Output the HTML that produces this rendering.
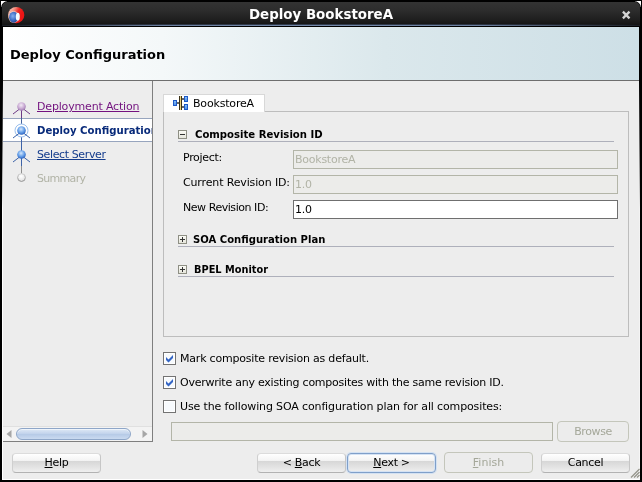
<!DOCTYPE html>
<html>
<head>
<meta charset="utf-8">
<title>Deploy BookstoreA</title>
<style>
html,body{margin:0;padding:0;}
body{width:642px;height:482px;overflow:hidden;background:#000;font-family:"DejaVu Sans","Liberation Sans",sans-serif;font-size:11px;color:#000;}
#win{will-change:transform;position:absolute;left:0;top:0;width:642px;height:482px;background:#000;overflow:hidden;}
.abs{position:absolute;}
#titlebar{left:2px;top:2px;width:638px;height:22px;background:linear-gradient(#333333,#2c2c2c 40%,#1f1f1f 80%,#161616);border-radius:5px 5px 0 0;}
#frameblk{left:1px;top:1px;width:640px;height:20px;background:#000;border-radius:7px 7px 0 0;}
#tl1{left:2px;top:24px;width:638px;height:1px;background:linear-gradient(90deg,#141414,#2c3443 25%,#323c4e 50%,#2c3443 75%,#141414);}
#tl2{left:2px;top:25px;width:638px;height:1px;background:linear-gradient(90deg,#1a1d24,#6b7f9f 25%,#7489a9 50%,#6b7f9f 75%,#1a1d24);}
#cornerL{left:1px;top:1px;width:6px;height:6px;background:#fff;}
#cornerR{left:635px;top:1px;width:6px;height:6px;background:#fff;}
#title{left:0;top:7px;width:642px;text-align:center;color:#fff;font-weight:bold;font-size:13.4px;line-height:16px;white-space:nowrap;}
#content{left:3px;top:27px;width:636px;height:452px;background:#ededed;border-bottom:1px solid #fff;}
#rcol{left:639px;top:27px;width:1px;height:453px;background:linear-gradient(#000,#000 12%,#666 25%,#f2f2f2 40%,#f6f6f6);}
#lcol{left:2px;top:27px;width:1px;height:453px;background:linear-gradient(#000,#000 12%,#666 25%,#fff 40%,#fff);}
#header{left:3px;top:27px;width:636px;height:53px;background:linear-gradient(90deg,#ffffff 0%,#f4f8f9 25%,#dbe8ec 60%,#cddfe6 100%);}
#hline{left:3px;top:80px;width:636px;height:1px;background:#6e6e6e;}
#htitle{left:10px;top:47px;font-weight:bold;font-size:13px;line-height:16px;white-space:nowrap;}
#leftpanel{left:3px;top:81px;width:149px;height:360px;background:#ededed;border-right:1px solid #7f7f7f;border-bottom:1px solid #7f7f7f;}
.t{white-space:nowrap;line-height:13px;letter-spacing:-0.2px;}
.b{font-weight:bold;letter-spacing:0;display:inline-block;transform-origin:0 0;}
.btn{letter-spacing:-0.3px;height:18px;border:1px solid;border-color:#dcdcdc #c6c6c6 #b2b2b2 #cfcfcf;border-radius:4px;background:linear-gradient(#ffffff,#f4f4f4 36%,#d6d6d6 38%,#e2e2e2 70%,#efefef);text-align:center;line-height:18px;white-space:nowrap;}
.btn.dis{color:#a4a799;background:#ececec;border-color:#c4c6bb;}
.field{height:17px;border:1px solid #b3b5a8;background:#ececea;}
.cb{width:11px;height:11px;border:1px solid #737373;background:#f7fafd;box-shadow:inset 0 0 0 1px #fff;}
.sec{height:1px;background:#aeb0bb;}
.pm{width:7px;height:7px;border:1px solid #8e8f84;background:linear-gradient(#fafaf5,#e6e6dc);}
</style>
</head>
<body>
<div id="win">
  <div class="abs" id="cornerL"></div>
  <div class="abs" id="cornerR"></div>
  <div class="abs" id="frameblk"></div>
  <div class="abs" id="titlebar"></div>
  <div class="abs" id="tl1"></div><div class="abs" id="tl2"></div>
  <svg class="abs" style="left:8px;top:6px" width="18" height="19" viewBox="0 0 18 19">
    <defs>
      <radialGradient id="bl" cx="0.4" cy="0.4" r="0.65"><stop offset="0" stop-color="#86aeee"/><stop offset="0.6" stop-color="#3f6cc4"/><stop offset="1" stop-color="#203f8c"/></radialGradient>
      <linearGradient id="rd" x1="0" y1="0.15" x2="0.75" y2="0.55"><stop offset="0" stop-color="#f9cdbf"/><stop offset="0.35" stop-color="#f59c8c"/><stop offset="0.7" stop-color="#ee2a25"/><stop offset="1" stop-color="#ec1515"/></linearGradient>
    </defs>
    <circle cx="8.2" cy="9.1" r="8.1" fill="url(#rd)"/>
    <ellipse cx="5.7" cy="11" rx="5.3" ry="6" fill="#f7ddd6" opacity="0.75"/>
    <ellipse cx="5.7" cy="11.2" rx="4.6" ry="5.5" fill="url(#bl)"/>
    <ellipse cx="9.8" cy="10.7" rx="2" ry="3.9" fill="#f4fbff"/>
  </svg>
  <div class="abs" id="title">Deploy BookstoreA</div>
  <svg class="abs" style="left:621px;top:10px" width="11" height="11" viewBox="0 0 11 11"><path d="M1.9 1.6 L8.5 8.4 M8.5 1.6 L1.9 8.4" stroke="#d4d4d4" stroke-width="2.3" fill="none"/></svg>

  <div class="abs" id="content"></div><div class="abs" id="lcol"></div><div class="abs" id="rcol"></div>
  <div class="abs" id="header"></div>
  <div class="abs" id="hline"></div>
  <div class="abs" id="htitle">Deploy Configuration</div>

  <!-- left nav panel -->
  <div class="abs" id="leftpanel"></div>
  <div class="abs" style="left:3px;top:118px;width:149px;height:22px;background:#fff;border-top:1px solid #97a5be;border-bottom:1px solid #97a5be;"></div>
  <svg class="abs" style="left:3px;top:81px" width="149" height="120" viewBox="0 0 149 120">
    <defs>
      <radialGradient id="gp" cx="0.45" cy="0.35" r="0.65"><stop offset="0" stop-color="#f3eaf5"/><stop offset="0.55" stop-color="#cdb0d6"/><stop offset="1" stop-color="#a07bb2"/></radialGradient>
      <radialGradient id="gb" cx="0.45" cy="0.35" r="0.65"><stop offset="0" stop-color="#d6e8fc"/><stop offset="0.55" stop-color="#6aa3ea"/><stop offset="1" stop-color="#2a62c0"/></radialGradient>
      <linearGradient id="gws" x1="0" y1="0" x2="0" y2="1"><stop offset="0" stop-color="#cfcfcf"/><stop offset="1" stop-color="#8f8f8f"/></linearGradient>
      <radialGradient id="gw" cx="0.45" cy="0.35" r="0.7"><stop offset="0" stop-color="#ffffff"/><stop offset="1" stop-color="#dedede"/></radialGradient>
    </defs>
    <path d="M18.5 28 V37" stroke="#6d3a86" stroke-width="1"/>
    <path d="M18.5 37 V45" stroke="#44629c" stroke-width="1"/>
    <path d="M18.5 55 V70" stroke="#3d63a8" stroke-width="1"/>
    <path d="M18.5 77 V85" stroke="#3d63a8" stroke-width="1"/>
    <path d="M18.5 85 V93" stroke="#8e8e8e" stroke-width="1"/>
    <path d="M18.5 26.5 L10 33 M18.5 26.5 L27 33" stroke="#6d3a86" stroke-width="1" fill="none"/>
    <path d="M18.5 74.5 L10 81 M18.5 74.5 L27 81" stroke="#3d63a8" stroke-width="1" fill="none"/>
    <circle cx="18.5" cy="25.5" r="4.3" fill="url(#gp)"/>
    <circle cx="18.5" cy="49.5" r="6.5" fill="#fff" stroke="#9cc0ec" stroke-width="1"/>
    <path d="M18.5 50.5 L10 57 M18.5 50.5 L27 57" stroke="#3d63a8" stroke-width="1" fill="none"/>
    <circle cx="18.5" cy="49.5" r="4.3" fill="url(#gb)"/>
    <circle cx="18.5" cy="73.5" r="4.3" fill="url(#gb)"/>
    <circle cx="18.5" cy="96.5" r="3.9" fill="url(#gw)" stroke="url(#gws)" stroke-width="1"/>
  </svg>
  <div class="abs t" style="left:37px;top:100px;color:#73127f;text-decoration:underline;letter-spacing:-0.17px;">Deployment Action</div>
  <div class="abs" style="left:37px;top:124px;width:115px;height:14px;overflow:hidden;"><div class="t b" style="color:#082a7a;transform:scaleX(0.921);">Deploy Configuration</div></div>
  <div class="abs t" style="left:37px;top:148px;color:#143c8c;text-decoration:underline;letter-spacing:-0.38px;">Select Server</div>
  <div class="abs t" style="left:37px;top:172px;color:#b1b3a6;letter-spacing:-0.7px;">Summary</div>

  <!-- scrollbar -->
  <div class="abs" style="left:3px;top:426px;width:149px;height:14px;background:#f3f3f3;border-top:1px solid #e0e0e0;"></div>
  <div class="abs" style="left:16px;top:428px;width:113px;height:10px;border:1px solid #8ea6c8;border-radius:6px;background:linear-gradient(#dfe9f6,#c3d4ec 45%,#b7cbe7 55%,#cadaf0);box-sizing:content-box;box-shadow:inset 0 1px 0 #eef4fb;"></div>
  <svg class="abs" style="left:5px;top:429px" width="8" height="10" viewBox="0 0 8 10"><path d="M6.5 1 L1.5 5 L6.5 9Z" fill="#a6a6a6"/></svg>
  <svg class="abs" style="left:141px;top:429px" width="8" height="10" viewBox="0 0 8 10"><path d="M1.5 1 L6.5 5 L1.5 9Z" fill="#a6a6a6"/></svg>

  <!-- tab panel -->
  <div class="abs" style="left:163px;top:111px;width:464px;height:224px;border:1px solid #bdbdbd;"></div>
  <div class="abs" style="left:163px;top:94px;width:100px;height:17px;border:1px solid #d8d8d8;border-bottom:none;background:#fff;"></div>
  <svg class="abs" style="left:172px;top:95px" width="18" height="16" viewBox="0 0 18 16">
    <defs><linearGradient id="bx" x1="0" y1="0" x2="0" y2="1"><stop offset="0" stop-color="#8cc4fb"/><stop offset="1" stop-color="#4a8ee6"/></linearGradient></defs>
    <rect x="5" y="7.3" width="2.5" height="1.4" fill="#262626"/>
    <rect x="10" y="3.3" width="2.5" height="1.4" fill="#262626"/>
    <rect x="10" y="11.3" width="2.5" height="1.4" fill="#262626"/>
    <rect x="7" y="1" width="1" height="14" fill="#3b3218"/>
    <rect x="8" y="1" width="1" height="14" fill="#ecd27e"/>
    <rect x="9" y="1" width="1" height="14" fill="#3b3218"/>
    <rect x="1.5" y="5.5" width="3" height="5" fill="url(#bx)" stroke="#1e59c6"/>
    <rect x="12.5" y="1.5" width="3" height="5" fill="url(#bx)" stroke="#1e59c6"/>
    <rect x="12.5" y="9.5" width="3" height="5" fill="url(#bx)" stroke="#1e59c6"/>
  </svg>
  <div class="abs t" style="left:193px;top:97px;letter-spacing:-0.18px;">BookstoreA</div>

  <!-- Composite Revision ID -->
  <div class="abs pm" style="left:178px;top:130px;"></div>
  <div class="abs" style="left:180px;top:134px;width:5px;height:1px;background:#333;"></div>
  <div class="abs t b" style="left:195px;top:128px;transform:scaleX(0.918);">Composite Revision ID</div>
  <div class="abs sec" style="left:178px;top:141px;width:436px;"></div>

  <div class="abs t" style="left:183px;top:151px;letter-spacing:-0.3px;">Project:</div>
  <div class="abs field" style="left:293px;top:150px;width:323px;"></div>
  <div class="abs t" style="left:295px;top:153px;color:#b1b3a6;letter-spacing:-0.25px;">BookstoreA</div>

  <div class="abs t" style="left:183px;top:176px;letter-spacing:-0.14px;">Current Revision ID:</div>
  <div class="abs field" style="left:293px;top:175px;width:323px;"></div>
  <div class="abs t" style="left:295px;top:178px;color:#b1b3a6;">1.0</div>

  <div class="abs t" style="left:183px;top:201px;letter-spacing:-0.45px;">New Revision ID:</div>
  <div class="abs field" style="left:293px;top:200px;width:323px;background:#fff;border-color:#6f6f6f;"></div>
  <div class="abs t" style="left:295px;top:203px;">1.0</div>

  <!-- SOA Configuration Plan -->
  <div class="abs pm" style="left:178px;top:235px;"></div>
  <div class="abs" style="left:180px;top:239px;width:5px;height:1px;background:#333;"></div>
  <div class="abs" style="left:182px;top:237px;width:1px;height:5px;background:#333;"></div>
  <div class="abs t b" style="left:193px;top:233px;transform:scaleX(0.914);">SOA Configuration Plan</div>
  <div class="abs sec" style="left:178px;top:246px;width:436px;"></div>

  <!-- BPEL Monitor -->
  <div class="abs pm" style="left:178px;top:265px;"></div>
  <div class="abs" style="left:180px;top:269px;width:5px;height:1px;background:#333;"></div>
  <div class="abs" style="left:182px;top:267px;width:1px;height:5px;background:#333;"></div>
  <div class="abs t b" style="left:194px;top:263px;transform:scaleX(0.89);">BPEL Monitor</div>
  <div class="abs sec" style="left:178px;top:276px;width:436px;"></div>

  <!-- checkboxes -->
  <div class="abs cb" style="left:163px;top:352px;"></div>
  <svg class="abs" style="left:163px;top:352px" width="13" height="13" viewBox="0 0 13 13"><path d="M3 5 L5.5 7.5 L10 3 L10 6 L5.5 10.5 L3 8Z" fill="#3465c4"/></svg>
  <div class="abs t" style="left:180px;top:352px;letter-spacing:-0.2px;">Mark composite revision as default.</div>

  <div class="abs cb" style="left:163px;top:376px;"></div>
  <svg class="abs" style="left:163px;top:376px" width="13" height="13" viewBox="0 0 13 13"><path d="M3 5 L5.5 7.5 L10 3 L10 6 L5.5 10.5 L3 8Z" fill="#3465c4"/></svg>
  <div class="abs t" style="left:180px;top:376px;letter-spacing:-0.237px;">Overwrite any existing composites with the same revision ID.</div>

  <div class="abs cb" style="left:163px;top:400px;"></div>
  <div class="abs t" style="left:180px;top:400px;letter-spacing:-0.135px;">Use the following SOA configuration plan for all composites:</div>

  <div class="abs field" style="left:171px;top:422px;width:380px;"></div>
  <div class="abs btn dis" style="left:557px;top:421px;width:70px;height:19px;line-height:20px;border-radius:4px;letter-spacing:-0.4px;">Browse</div>

  <!-- buttons -->
  <div class="abs btn" style="left:12px;top:453px;width:87px;"><u>H</u>elp</div>
  <div class="abs btn" style="left:257px;top:453px;width:87px;">&lt; <u>B</u>ack</div>
  <div class="abs btn" style="left:347px;top:453px;width:87px;border-color:#7f9fc9;box-shadow:inset 0 0 0 1px #d4e2f4,0 0 0 1px #d3e1f2;"><u>N</u>ext &gt;</div>
  <div class="abs btn dis" style="left:444px;top:452px;width:87px;height:19px;line-height:20px;letter-spacing:0;"><u>F</u>inish</div>
  <div class="abs btn" style="left:541px;top:453px;width:87px;">Cancel</div>

  <!-- resize grip -->
  <svg class="abs" style="left:630px;top:468px" width="10" height="10" viewBox="0 0 10 10"><path d="M1 9.5 L9.5 1 M4 9.5 L9.5 4 M7 9.5 L9.5 7" stroke="#94948a" stroke-width="1.3" fill="none"/></svg>
</div>
</body>
</html>
